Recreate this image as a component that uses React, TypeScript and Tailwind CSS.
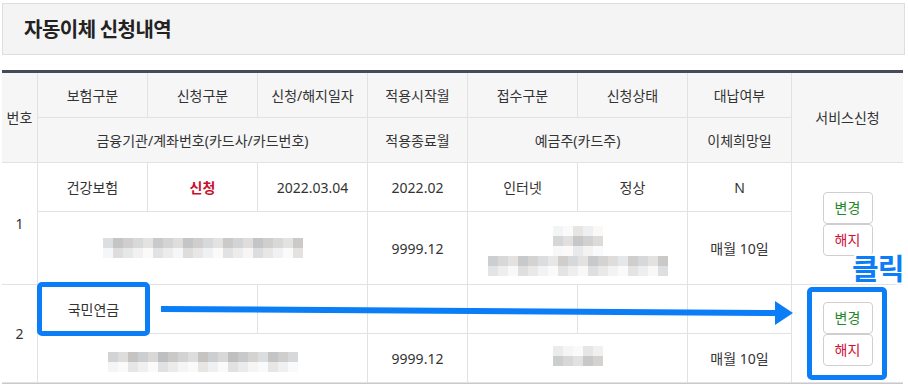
import React from "react";

const cell =
  "flex items-center justify-center border-r border-b border-[#e2e2e4] text-[14px] text-[#333]";

// pixelated (blurred) personal info
function Mosaic({ cols, rows, seed = 1 }: { cols: number; rows: number[]; seed?: number }) {
  return (
    <div className="flex flex-col">
      {rows.map((base, r) => (
        <div key={r} className="flex">
          {Array.from({ length: cols }).map((_, c) => {
            const v = base + (((c * 37 + r * 91 + seed * 13) % 7) - 3) * 5;
            const tint = ((c * 17 + seed * 5 + r) % 5) - 2;
            const g = Math.max(150, Math.min(250, v));
            return (
              <div
                key={c}
                className="w-[10px] h-[10px]"
                style={{ backgroundColor: `rgb(${g + tint},${g},${g - tint})` }}
              />
            );
          })}
        </div>
      ))}
    </div>
  );
}

function Btn({ label, color }: { label: string; color: string }) {
  return (
    <div
      className={`w-[50px] h-[32px] flex items-center justify-center rounded-[4px] border border-[#cfcfcf] bg-white text-[14px] ${color}`}
    >
      {label}
    </div>
  );
}

export default function App() {
  return (
    <div className="relative w-[908px] h-[390px] bg-white overflow-hidden [font-family:'Noto_Sans','Noto_Sans_CJK_KR',sans-serif]">
      <div className="pt-[3px] pl-[2px] w-[905px]">
        {/* title */}
        <div className="h-[52px] border border-[#dedede] bg-[#f4f4f4] flex items-center pl-[21px]">
          <h1 className="text-[20px] font-bold text-[#222] tracking-[-0.5px] [font-family:'Noto_Sans_CJK_KR',sans-serif]">
            자동이체 신청내역
          </h1>
        </div>

        {/* table */}
        <div className="mt-[15px] w-[901px] border-t-[3px] border-[#474a5c] border-b border-b-[#c9c9cc] grid grid-cols-[36px_110px_110px_110px_100px_110px_110px_104px_111px] grid-rows-[45px_45px_49px_73px_49px_49px]">
          {/* header */}
          <div className={`${cell} bg-[#f6f6f6] row-span-2`}>번호</div>
          <div className={`${cell} bg-[#f6f6f6]`}>보험구분</div>
          <div className={`${cell} bg-[#f6f6f6]`}>신청구분</div>
          <div className={`${cell} bg-[#f6f6f6]`}>신청/해지일자</div>
          <div className={`${cell} bg-[#f6f6f6]`}>적용시작월</div>
          <div className={`${cell} bg-[#f6f6f6]`}>접수구분</div>
          <div className={`${cell} bg-[#f6f6f6]`}>신청상태</div>
          <div className={`${cell} bg-[#f6f6f6]`}>대납여부</div>
          <div className={`${cell} bg-[#f6f6f6] row-span-2 border-r-0`}>서비스신청</div>
          <div className={`${cell} bg-[#f6f6f6] col-span-3`}>금융기관/계좌번호(카드사/카드번호)</div>
          <div className={`${cell} bg-[#f6f6f6]`}>적용종료월</div>
          <div className={`${cell} bg-[#f6f6f6] col-span-2`}>예금주(카드주)</div>
          <div className={`${cell} bg-[#f6f6f6]`}>이체희망일</div>

          {/* row 1 */}
          <div className={`${cell} row-span-2`}>1</div>
          <div className={cell}>건강보험</div>
          <div className={`${cell} font-bold text-[#c8102e]`}>신청</div>
          <div className={cell}>2022.03.04</div>
          <div className={cell}>2022.02</div>
          <div className={cell}>인터넷</div>
          <div className={cell}>정상</div>
          <div className={cell}>N</div>
          <div className={`${cell} row-span-2 border-r-0 flex-col`}>
            <Btn label="변경" color="text-[#1e8a2a]" />
            <Btn label="해지" color="text-[#d0103a]" />
          </div>
          <div className={`${cell} col-span-3`}>
            <Mosaic cols={20} rows={[212, 236]} seed={2} />
          </div>
          <div className={cell}>9999.12</div>
          <div className={`${cell} col-span-2 flex-col pt-[6px]`}>
            <Mosaic cols={5} rows={[244, 214, 248]} seed={4} />
            <Mosaic cols={18} rows={[216, 238]} seed={6} />
          </div>
          <div className={cell}>매월 10일</div>

          {/* row 2 */}
          <div className={`${cell} row-span-2`}>2</div>
          <div className={cell}></div>
          <div className={cell}></div>
          <div className={cell}></div>
          <div className={cell}></div>
          <div className={cell}></div>
          <div className={cell}></div>
          <div className={cell}></div>
          <div className={`${cell} row-span-2 border-r-0 flex-col`}>
            <Btn label="변경" color="text-[#1e8a2a]" />
            <Btn label="해지" color="text-[#d0103a]" />
          </div>
          <div className={`${cell} col-span-3 pt-[8px]`}>
            <Mosaic cols={19} rows={[206, 240]} seed={3} />
          </div>
          <div className={cell}>9999.12</div>
          <div className={`${cell} col-span-2 pb-[4px]`}>
            <Mosaic cols={5} rows={[240, 210]} seed={5} />
          </div>
          <div className={cell}>매월 10일</div>
        </div>
      </div>

      {/* annotations */}
      <div className="absolute left-[37px] top-[282px] w-[113px] h-[54px] border-[5px] border-[#0b7ef7] rounded-[5px] bg-white flex items-center justify-center text-[14px] text-[#333]">
        국민연금
      </div>
      <svg className="absolute left-0 top-0 pointer-events-none" width="908" height="390">
        <line x1="161" y1="309" x2="778" y2="313" stroke="#0b7ef7" strokeWidth="6" />
        <polygon points="775,301 793,313 775,325" fill="#0b7ef7" />
      </svg>
      <div className="absolute left-[807px] top-[287px] w-[80px] h-[93px] border-[5px] border-[#0b7ef7] rounded-[5px] pointer-events-none" />
      <div className="absolute left-[852px] top-[253px] text-[29px] leading-none font-bold text-[#0b7ef7] tracking-[-1px] [font-family:'Noto_Sans_CJK_KR',sans-serif] [paint-order:stroke] [-webkit-text-stroke:4px_white]">
        클릭
      </div>
    </div>
  );
}
